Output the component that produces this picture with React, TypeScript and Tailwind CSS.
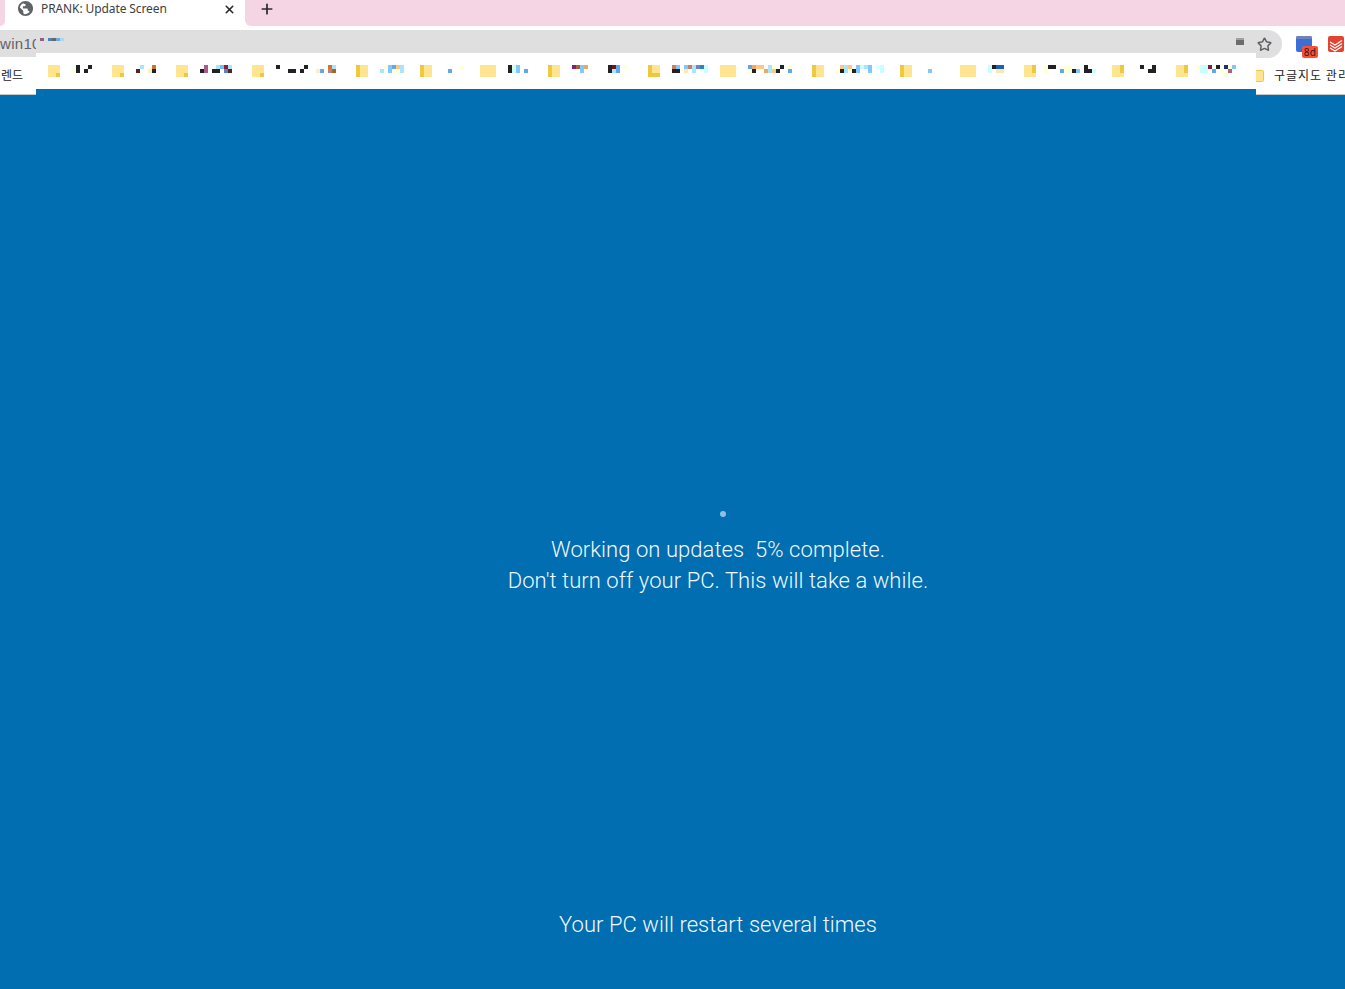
import { Plus, Star, X } from 'lucide-react';

const DARK = '#222226';
const PALE = '#ffffd8';
const SKY = '#a8e6ff';
const BLUE = '#80c8ff';
const MID = '#60a8e8';
const CYAN = '#c8ffff';
const PEACH = '#ffc880';

// [x, y, w, h, colour] of the blurred-out bookmark labels, in page pixels
type Px = [number, number, number, number, string];

const mosaic: Px[] = [
  [72, 65, 4, 4, '#eefffb'], [72, 69, 4, 4, PALE], [76, 65, 4, 8, DARK], [84, 69, 4, 4, DARK], [88, 65, 4, 4, DARK],
  [136, 69, 4, 4, '#5c2020'], [140, 65, 4, 4, SKY], [148, 69, 4, 4, '#ffefc0'], [152, 65, 4, 4, '#c87820'], [152, 69, 4, 4, DARK],
  [200, 69, 4, 4, DARK], [204, 65, 4, 8, '#a85c8c'], [212, 69, 8, 4, DARK], [216, 65, 4, 4, SKY], [220, 65, 4, 4, '#70c0f0'],
  [224, 65, 4, 4, '#8a2030'], [228, 65, 4, 4, SKY], [224, 69, 4, 4, '#5a80d0'], [228, 69, 4, 4, '#5c2020'],
  [276, 65, 4, 4, DARK], [288, 69, 8, 4, DARK], [300, 69, 4, 4, DARK], [304, 65, 4, 4, DARK], [316, 69, 4, 4, '#ffefc0'],
  [320, 69, 4, 4, MID], [328, 65, 4, 4, '#c87830'], [332, 65, 4, 4, SKY], [328, 69, 4, 4, '#c08080'], [332, 69, 4, 4, '#b06020'],
  [380, 69, 4, 4, SKY], [384, 65, 4, 4, PALE], [388, 65, 4, 8, BLUE], [392, 65, 4, 4, MID], [396, 65, 4, 4, PEACH],
  [392, 69, 8, 4, PALE], [400, 65, 4, 8, SKY],
  [448, 69, 4, 4, MID], [460, 65, 4, 4, PALE],
  [508, 65, 4, 8, DARK], [512, 65, 4, 8, '#d0fff0'], [516, 65, 4, 8, BLUE], [524, 69, 4, 4, MID],
  [572, 65, 4, 4, '#802080'], [576, 65, 4, 4, '#b06030'], [580, 65, 4, 8, BLUE], [584, 65, 4, 4, '#e8a860'],
  [608, 65, 4, 8, DARK], [612, 65, 4, 4, '#6c1820'], [612, 69, 4, 4, SKY], [616, 65, 4, 8, MID], [624, 65, 4, 4, PALE],
  [672, 65, 4, 4, '#d08060'], [676, 65, 4, 4, BLUE], [672, 69, 8, 4, DARK],
  [684, 65, 4, 4, BLUE], [688, 65, 4, 4, '#c88060'], [692, 65, 4, 8, SKY], [696, 65, 4, 4, '#7080c0'], [700, 65, 4, 4, '#3088b0'],
  [704, 65, 4, 8, CYAN], [684, 69, 4, 4, '#ffe8b0'],
  [748, 65, 4, 4, MID], [752, 65, 4, 4, '#f0a860'], [756, 65, 8, 4, PEACH], [748, 69, 4, 4, PALE], [752, 69, 4, 4, DARK],
  [764, 69, 4, 4, '#f0a860'], [768, 65, 4, 8, SKY], [772, 65, 4, 4, PALE], [772, 69, 4, 4, PEACH], [776, 69, 4, 4, DARK],
  [780, 65, 4, 4, DARK], [788, 65, 4, 4, PALE], [788, 69, 4, 4, MID],
  [836, 69, 4, 4, PALE], [840, 65, 4, 4, PEACH], [840, 69, 4, 4, DARK], [844, 65, 4, 8, SKY], [848, 65, 4, 4, PEACH],
  [848, 69, 4, 4, PALE], [852, 69, 4, 4, DARK], [856, 65, 4, 8, BLUE], [860, 65, 4, 4, CYAN], [864, 65, 4, 4, SKY],
  [868, 65, 4, 8, BLUE], [876, 65, 4, 4, '#e0ffff'], [880, 65, 4, 8, CYAN],
  [928, 69, 4, 4, BLUE],
  [988, 65, 4, 8, CYAN], [992, 65, 4, 4, DARK], [996, 65, 8, 4, '#2060b0'], [996, 69, 8, 4, '#ffe8b0'],
  [1044, 65, 4, 8, PALE], [1048, 65, 8, 4, DARK], [1060, 69, 4, 4, MID], [1064, 65, 8, 8, PALE], [1072, 69, 4, 4, DARK],
  [1076, 69, 4, 4, BLUE], [1084, 65, 4, 8, DARK], [1088, 69, 4, 4, DARK], [1092, 69, 4, 4, CYAN],
  [1140, 65, 4, 4, DARK], [1148, 69, 8, 4, DARK], [1152, 65, 4, 4, DARK],
  [1196, 65, 4, 4, PALE], [1200, 65, 8, 8, CYAN], [1208, 65, 4, 4, '#802030'], [1212, 69, 4, 4, MID], [1216, 65, 4, 4, DARK],
  [1220, 69, 4, 4, PALE], [1224, 65, 4, 4, '#203070'], [1224, 73, 4, 4, PALE], [1228, 65, 4, 4, PALE], [1228, 69, 4, 4, '#b06070'],
  [1232, 65, 4, 4, BLUE],
];

// [x, width, which part is the darker strip]
const folders: [number, number, 'corner' | 'left' | 'right' | 'none' | 'bottom'][] = [
  [48, 12, 'corner'], [112, 12, 'corner'], [176, 12, 'corner'], [252, 12, 'corner'],
  [356, 12, 'left'], [420, 12, 'left'], [480, 16, 'none'], [548, 12, 'left'], [648, 12, 'bottom'],
  [720, 16, 'none'], [812, 12, 'left'], [900, 12, 'left'], [960, 16, 'none'],
  [1024, 12, 'right'], [1112, 12, 'right'], [1176, 12, 'right'],
];

function Mosaic() {
  return (
    <svg width="1220" height="12" viewBox="36 65 1220 12" className="block" shapeRendering="crispEdges">
      {folders.map(([x, w, strip]) => (
        <g key={x}>
          <rect x={x} y={65} width={w} height={12} fill="#ffe590" />
          {strip === 'corner' && <rect x={x + 8} y={73} width={4} height={4} fill="#f0c840" />}
          {strip === 'left' && <rect x={x} y={65} width={4} height={12} fill="#f0c840" />}
          {strip === 'right' && <rect x={x + 8} y={65} width={4} height={8} fill="#f0c840" />}
          {strip === 'bottom' && (
            <>
              <rect x={x} y={65} width={4} height={12} fill="#f0c840" />
              <rect x={x} y={73} width={12} height={4} fill="#f0c840" />
            </>
          )}
        </g>
      ))}
      {mosaic.map(([x, y, w, h, c], i) => (
        <rect key={i} x={x} y={y} width={w} height={h} fill={c} />
      ))}
    </svg>
  );
}

function Globe() {
  return (
    <svg width="15" height="15" viewBox="2 2 20 20" fill="#5f6368">
      <path d="M12 2C6.48 2 2 6.48 2 12s4.480 10 10 10 10-4.480 10-10S17.520 2 12 2z" />
      <path fill="#fff" d="M11 19.500c-1.500-.300-2-1.500-2-3V15L4.500 10.500C5 8 6.500 6 9 5c.6.900 1.800 1.200 3 .7v2.300c0 .55-.45 1-1 1H8.500v3H14c.55 0 1 .45 1 1v2h1.500l1 1.800c-1.800 1.700-4 2.700-6.500 2.700z" />
    </svg>
  );
}

function TodoistIcon() {
  return (
    <svg width="16" height="16" viewBox="0 0 16 16" className="block">
      <rect width="16" height="16" rx="2" fill="#e44332" />
      <path d="M2 6 7 9 14 4.500M2 9 7 12 14 7.500M2 12 7 15 14 10.500" fill="none" stroke="#fff" strokeWidth="1.3" />
    </svg>
  );
}

function BoardIcon() {
  return (
    <div className="relative h-[22px] w-[22px]">
      <div className="h-4 w-4 rounded-[2px] bg-[#3a6fd8]">
        <div className="h-[3px] rounded-t-[2px] bg-[#6f83b8]" />
      </div>
      <div className="absolute top-[10px] left-[6px] flex h-3 w-4 items-center justify-center rounded-[2px] bg-[#f5523a] text-[10px] leading-none tracking-[0.4px] text-[#3a1410]">
        8d
      </div>
    </div>
  );
}

function TabStrip() {
  return (
    <div className="flex h-[26px] bg-white font-['Noto_Sans',sans-serif]">
      <div className="h-full w-[5px] rounded-br-[6px] bg-[#f5d5e4]" />
      <div className="flex h-full w-[240px] items-start pt-px pl-[13px]">
        <Globe />
        <span className="ml-[8px] text-[12px] leading-[15px] tracking-[-0.1px] whitespace-nowrap text-[#3c4043]">PRANK: Update Screen</span>
        <X size={13} strokeWidth={3} className="mt-[2px] ml-auto mr-[9px] text-[#2b2b2b]" />
      </div>
      <div className="flex h-full flex-1 items-start rounded-bl-[6px] bg-[#f5d5e4] pt-px pl-[14px]">
        <Plus size={16} strokeWidth={2.6} className="text-[#2b2b2b]" />
      </div>
    </div>
  );
}

function Toolbar() {
  return (
    <div className="flex h-[27px] bg-white pt-1">
      <div className="relative z-10 flex h-[28px] w-[1282px] items-start rounded-r-[14px] bg-[#dfdfdf]">
        <span className="w-9 overflow-hidden text-[15px] leading-[28px] tracking-[0.3px] text-[#5f6368] font-['Liberation_Sans',sans-serif]">win10</span>
        <svg width="28" height="3" viewBox="0 0 28 3" className="mt-2 ml-1" shapeRendering="crispEdges">
          <rect x="0" width="4" height="3" fill="#965a8a" />
          <rect x="8" width="4" height="3" fill="#5080b0" />
          <rect x="12" width="4" height="3" fill="#606870" />
          <rect x="16" width="4" height="3" fill="#70a8d8" />
          <rect x="20" width="4" height="3" fill="#a8d8f8" />
        </svg>
        <div className="mt-2 ml-auto h-[7px] w-2 border-t-2 border-[#a0a0a0] bg-[#6c6c6c]" />
        <Star size={15} strokeWidth={2.4} className="mt-[7px] mr-[10px] ml-[13px] text-[#5f6368]" />
      </div>
      <div className="flex flex-1 items-start gap-[10px] pt-[6px] pl-[14px]">
        <BoardIcon />
        <TodoistIcon />
      </div>
    </div>
  );
}

function BookmarksBar() {
  return (
    <div className="flex h-[42px] bg-[#006eb0] text-[12px] leading-[16px] text-[#222] font-['Noto_Sans_CJK_KR',sans-serif]">
      <div className="relative z-20 mt-1 flex h-[38px] w-9 items-start overflow-hidden border-b border-[#c8c8c8] bg-white pt-[10px] pl-px">
        <span className="whitespace-nowrap">렌드</span>
      </div>
      <div className="relative z-20 h-9 w-[1220px] bg-white pt-3">
        <Mosaic />
      </div>
      <div className="flex min-w-0 flex-1 items-start overflow-hidden border-b border-[#c8c8c8] bg-white pt-[14px]">
        <div className="mt-[3px] h-3 w-2 shrink-0 rounded-r-[2px] border border-l-0 border-[#e8c850] bg-[#ffe590]" />
        <span className="ml-[10px] shrink-0 tracking-[1px] whitespace-nowrap">구글지도 관리</span>
      </div>
    </div>
  );
}

export default function App() {
  return (
    <div className="flex h-[989px] flex-col overflow-hidden bg-[#006eb0]">
      <TabStrip />
      <Toolbar />
      <BookmarksBar />
      <main className="flex flex-1 flex-col items-center pl-[91px] text-center text-[22px] leading-[31px] tracking-[0.06px] text-[#f2f8fc] font-['Roboto',sans-serif] font-light">
        <div className="mt-[416px] ml-[10px] h-[6px] w-[6px] rounded-full bg-[#8fc0e0]" />
        <p className="mt-[17px] whitespace-pre">Working on updates  5% complete.</p>
        <p className="whitespace-pre">Don't turn off your PC. This will take a while.</p>
        <p className="mt-[313px] whitespace-pre">Your PC will restart several times</p>
      </main>
    </div>
  );
}
